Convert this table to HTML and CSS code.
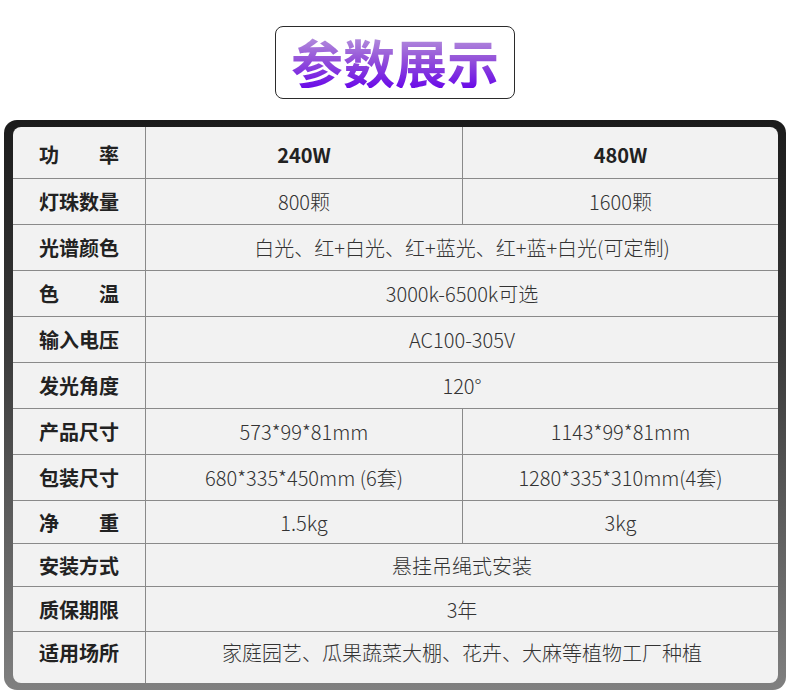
FILE: index.html
```html
<!DOCTYPE html>
<html lang="zh">
<head>
<meta charset="utf-8">
<title>参数展示</title>
<link rel="stylesheet" href="styles.css">
</head>
<body>
<div class="page">
  <div class="title-wrap">
    <div class="title-box"><span class="title-text">参数展示</span></div>
  </div>
  <div class="frame">
    <div class="panel">
      <div class="grid">
        <div class="cell label head">功&emsp;&emsp;率</div>
        <div class="cell head">240W</div>
        <div class="cell head">480W</div>

        <div class="cell label">灯珠数量</div>
        <div class="cell">800颗</div>
        <div class="cell">1600颗</div>

        <div class="cell label">光谱颜色</div>
        <div class="cell span">白光、红+白光、红+蓝光、红+蓝+白光(可定制)</div>

        <div class="cell label">色&emsp;&emsp;温</div>
        <div class="cell span">3000k-6500k可选</div>

        <div class="cell label">输入电压</div>
        <div class="cell span">AC100-305V</div>

        <div class="cell label">发光角度</div>
        <div class="cell span">120°</div>

        <div class="cell label">产品尺寸</div>
        <div class="cell">573*99*81mm</div>
        <div class="cell">1143*99*81mm</div>

        <div class="cell label">包装尺寸</div>
        <div class="cell">680*335*450mm (6套)</div>
        <div class="cell">1280*335*310mm(4套)</div>

        <div class="cell label">净&emsp;&emsp;重</div>
        <div class="cell">1.5kg</div>
        <div class="cell">3kg</div>

        <div class="cell label">安装方式</div>
        <div class="cell span">悬挂吊绳式安装</div>

        <div class="cell label">质保期限</div>
        <div class="cell span">3年</div>

        <div class="cell label last">适用场所</div>
        <div class="cell span last">家庭园艺、瓜果蔬菜大棚、花卉、大麻等植物工厂种植</div>
      </div>
    </div>
  </div>
</div>
</body>
</html>
```

FILE: styles.css
```css
* { box-sizing: border-box; }
html, body { margin: 0; padding: 0; background: #ffffff; }
body {
  font-family: "Noto Sans CJK SC", "Noto Sans", sans-serif;
  width: 790px;
  height: 699px;
  overflow: hidden;
}
.page { padding-top: 26px; }
.title-wrap { display: flex; justify-content: center; }
.title-box {
  width: 240px;
  height: 73px;
  border: 1.5px solid #2b2b2b;
  border-radius: 8px;
  background: #fff;
  display: flex;
  align-items: center;
  justify-content: center;
}
.title-text {
  font-size: 52px;
  font-weight: 700;
  line-height: 1;
  background: linear-gradient(180deg, #b592dc 0%, #9452d9 45%, #6a0ae8 100%);
  -webkit-background-clip: text;
  background-clip: text;
  color: transparent;
  margin-top: -2px;
}
.frame {
  margin: 21px 4px 0 4px;
  padding: 7px 8px 7px 9px;
  border-radius: 13px;
  background: linear-gradient(180deg, #1c1c1c 0%, #3a3a3a 40%, #808080 100%);
}
.panel {
  background: #f2f2f2;
  border-radius: 8px;
  overflow: hidden;
}
.grid {
  display: grid;
  grid-template-columns: 132px 317px 1fr;
  grid-template-rows: 52px 46px 46px 46px 46px 46px 46px 46px 43px 43px 45px 51px;
}
.cell {
  display: flex;
  align-items: center;
  justify-content: center;
  border-bottom: 1px solid #8a8a8a;
  border-left: 1px solid #8a8a8a;
  font-size: 20px;
  font-weight: 300;
  color: #333;
  white-space: nowrap;
}
.cell.label {
  border-left: none;
  font-weight: 700;
  color: #222;
}
.cell.head {
  font-weight: 700;
  color: #222;
  padding-top: 3px;
}
.cell.span { grid-column: span 2; }
.cell.last {
  border-bottom: none;
  padding-bottom: 10px;
}
```
